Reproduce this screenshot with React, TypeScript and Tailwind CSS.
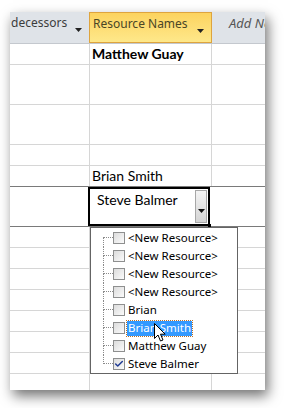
import { Check } from 'lucide-react';

const rows = [
  { h: 'h-[21px]', text: 'Matthew Guay', bold: true },
  { h: 'h-[40px]', text: '' },
  { h: 'h-[40px]', text: '' },
  { h: 'h-[21px]', text: '' },
  { h: 'h-[21px]', text: 'Brian Smith', dark: true },
];

const items = [
  { label: '<New Resource>' },
  { label: '<New Resource>' },
  { label: '<New Resource>' },
  { label: '<New Resource>' },
  { label: 'Brian' },
  { label: 'Brian Smith', active: true },
  { label: 'Matthew Guay' },
  { label: 'Steve Balmer', checked: true },
];

const uiFont = { fontFamily: '"Noto Sans", "Open Sans", sans-serif' };

function HeaderArrow() {
  return (
    <svg width="7" height="4" viewBox="0 0 7 4" className="shrink-0 mt-[15px]">
      <path d="M0 0 H7 L3.5 4 Z" fill="#222" />
    </svg>
  );
}

function Checkbox({ checked }: { checked?: boolean }) {
  return (
    <div className="w-[12px] h-[12px] border border-[#8e8f8f] bg-gradient-to-br from-[#dcdcdc] to-[#fbfbfb] flex items-center justify-center shrink-0">
      {checked && <Check className="w-[10px] h-[10px] text-[#1f3a93]" strokeWidth={3.5} />}
    </div>
  );
}

function Cursor() {
  return (
    <svg width="12" height="19" viewBox="0 0 12 19" className="absolute left-[63px] top-[94px]">
      <path
        d="M0.5 0.5 V15.5 L4 12 L6.5 18 L9 17 L6.5 11.2 H11.2 Z"
        fill="white"
        stroke="black"
        strokeWidth="1"
        strokeLinejoin="miter"
      />
    </svg>
  );
}

export default function App() {
  return (
    <div
      className="w-[284px] h-[408px] bg-white pl-[10px] pt-[12px] overflow-hidden"
      style={{ fontFamily: 'Lato, "Noto Sans", sans-serif' }}
    >
      <div className="relative w-[255px] h-[378px] bg-white shadow-[3px_6px_12px_rgba(0,0,0,0.55)] overflow-hidden">
        {/* column headers */}
        <div className="flex h-[32px] bg-[#dfe3e8] border-b border-[#c4c8ce] text-[12px] leading-[20px]" style={uiFont}>
          <div className="w-[80px] flex items-start justify-between pl-[1px] pt-[1px] pr-[7px] border-r border-[#c4c8ce] text-[#3c3c3c]">
            <span className="whitespace-nowrap">decessors</span>
            <HeaderArrow />
          </div>
          <div className="w-[123px] flex items-start justify-between pl-[3px] pt-[1px] pr-[7px] bg-gradient-to-b from-[#fcd35e] to-[#fee88a] border border-[#dea43e] -ml-[1px] text-[#4a4626]">
            <span className="whitespace-nowrap">Resource Names</span>
            <HeaderArrow />
          </div>
          <div className="flex-1 pl-[17px] pt-[1px] text-[13px] italic text-[#555] whitespace-nowrap overflow-hidden">
            Add New Field
          </div>
        </div>

        {/* data rows */}
        {rows.map((r, i) => (
          <div
            key={i}
            className={`flex ${r.h} border-b ${r.dark ? 'border-[#7a7a7a]' : 'border-[#d6d6d6]'}`}
          >
            <div className="w-[80px] border-r border-[#d6d6d6]" />
            <div
              className={`w-[122px] border-r border-[#d6d6d6] pl-[2px] text-[14px] leading-[20px] text-black whitespace-nowrap ${r.bold ? 'font-bold' : ''}`}
            >
              {r.text}
            </div>
            <div className="flex-1" />
          </div>
        ))}

        {/* selected row */}
        <div className="flex h-[40px] border-b border-[#7a7a7a]">
          <div className="w-[80px] border-r border-[#d6d6d6]" />
          <div className="relative w-[122px] -ml-[2px] mr-[2px] border-2 border-black flex">
            <div className="flex-1 pl-[7px] pt-[1px] text-[14px] leading-[20px] text-black">Steve Balmer</div>
            <div className="w-[12px] my-[1px] mr-[1px] border border-[#a7a7a7] bg-gradient-to-b from-[#f4f4f4] to-[#d4d4d4] flex items-center justify-center">
              <svg width="7" height="4" viewBox="0 0 7 4" className="mt-[8px]">
                <path d="M0 0 H7 L3.5 4 Z" fill="#111" />
              </svg>
            </div>
            <div className="absolute -right-[3px] -bottom-[3px] w-[3px] h-[3px] bg-black" />
          </div>
          <div className="flex-1" />
        </div>

        {Array.from({ length: 8 }).map((_, i) => (
          <div key={i} className="flex h-[21px] border-b border-[#d6d6d6]">
            <div className="w-[80px] border-r border-[#d6d6d6]" />
            <div className="w-[122px] border-r border-[#d6d6d6]" />
            <div className="flex-1" />
          </div>
        ))}

        {/* dropdown list */}
        <div
          className="absolute left-[80px] top-[215px] w-[148px] h-[147px] bg-white border border-[#646464] pt-[1px]"
          style={uiFont}
        >
          <div className="relative flex flex-col">
            {items.map((it, i) => (
              <div key={i} className="flex items-center h-[18px]">
                <div className="w-[12px] shrink-0" />
                <div className="w-[10px] h-[18px] flex flex-col shrink-0">
                  <div className={`h-[9px] border-b border-dotted border-[#8a8a8a] ${i > 0 ? 'border-l' : ''}`} />
                  <div className={`h-[9px] border-dotted border-[#8a8a8a] ${i < items.length - 1 ? 'border-l' : ''}`} />
                </div>
                <Checkbox checked={it.checked} />
                <span
                  className={`ml-[2px] px-[1px] h-[15px] flex items-center text-[11.5px] whitespace-nowrap ${
                    it.active
                      ? 'bg-[#3399ff] text-white outline outline-1 outline-dotted outline-[#b8702a]'
                      : 'text-black'
                  }`}
                >
                  {it.label}
                </span>
              </div>
            ))}
            <Cursor />
          </div>
        </div>
      </div>
    </div>
  );
}
